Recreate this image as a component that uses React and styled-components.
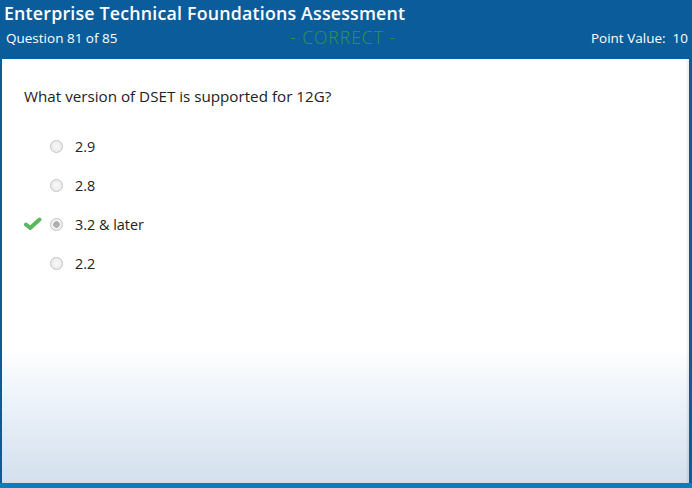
import React from 'react';
import styled, { createGlobalStyle } from 'styled-components';

const Global = createGlobalStyle`
  html, body { margin: 0; padding: 0; }
  body { background: #0b5f9e; font-family: "Open Sans", sans-serif; }
`;

const Frame = styled.div`
  width: 692px;
  height: 488px;
  display: flex;
  flex-direction: column;
  background: #0a5d9a;
  border-bottom: 5px solid #0a7cc0;
  box-sizing: border-box;
`;

const Header = styled.div`
  height: 59px;
  padding: 0 4px 0 6px;
  box-sizing: border-box;
  color: #fff;
  display: flex;
  flex-direction: column;
`;

const Title = styled.div`
  font-family: "Open Sans", sans-serif;
  font-weight: 600;
  font-size: 17.8px;
  line-height: 26px;
  letter-spacing: 0.2px;
  margin-left: -2px;
`;

const SubRow = styled.div`
  display: grid;
  grid-template-columns: 1fr auto 1fr;
  align-items: center;
  font-size: 13.5px;
  line-height: 24px;
`;

const Status = styled.div`
  color: #2e9a3a;
  font-weight: 300;
  font-size: 17.5px;
  letter-spacing: 1px;
  margin-top: -3px;
  margin-right: 8px;
`;

const Points = styled.div`
  text-align: right;
`;

const Panel = styled.div`
  flex: 1;
  margin: 0 3px 0 2px;
  background: linear-gradient(to bottom, #fff 0%, #fff 68%, #f0f5fb 78%, #e2eaf4 89%, #d3e0ee 100%);
  box-shadow: inset -2px 0 2px rgba(0,0,0,0.08);
  padding: 27px 0 0 22px;
  color: #222;
`;

const Question = styled.div`
  font-family: "Open Sans", sans-serif;
  font-size: 15.2px;
  line-height: 20px;
  margin-bottom: 30px;
`;

const Options = styled.div`
  display: flex;
  flex-direction: column;
  gap: 19px;
`;

const Option = styled.div`
  display: flex;
  align-items: center;
  height: 20px;
  font-family: "Open Sans", sans-serif;
  font-size: 14.4px;
`;

const Mark = styled.div`
  width: 24px;
  display: flex;
  align-items: center;
`;

const Radio = styled.span`
  width: 11px;
  height: 11px;
  border-radius: 50%;
  border: 1px solid #c4c4c4;
  background: radial-gradient(circle, ${p => (p.$checked ? '#b0b0b0 0, #b0b0b0 3px, #f4f4f4 3.5px' : '#f8f8f8 0')}, #e6e6e6 100%);
  margin-right: 12px;
  margin-left: 2px;
  flex-shrink: 0;
`;

const Check = () => (
  <svg width="18" height="14" viewBox="0 0 18 14">
    <path d="M2 7.5 L6.2 11 L15.5 2.5" fill="none" stroke="#5cb85c" strokeWidth="4" strokeLinecap="round" strokeLinejoin="round" />
  </svg>
);

const options = [
  { label: '2.9' },
  { label: '2.8' },
  { label: '3.2 & later', checked: true },
  { label: '2.2' },
];

export default function App() {
  return (
    <Frame>
      <Global />
      <Header>
        <Title>Enterprise Technical Foundations Assessment</Title>
        <SubRow>
          <div>Question 81 of 85</div>
          <Status>- CORRECT -</Status>
          <Points>Point Value:&nbsp; 10</Points>
        </SubRow>
      </Header>
      <Panel>
        <Question>What version of DSET is supported for 12G?</Question>
        <Options>
          {options.map(o => (
            <Option key={o.label}>
              <Mark>{o.checked && <Check />}</Mark>
              <Radio $checked={o.checked} />
              {o.label}
            </Option>
          ))}
        </Options>
      </Panel>
    </Frame>
  );
}
